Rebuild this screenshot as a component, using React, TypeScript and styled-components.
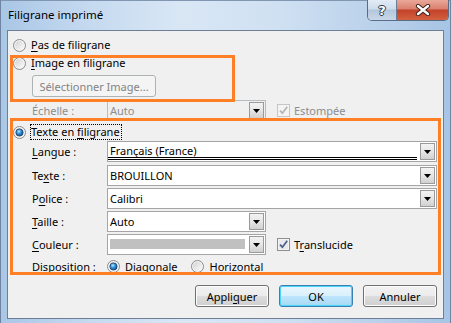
import React from 'react';
import styled, { createGlobalStyle } from 'styled-components';

const GlobalStyle = createGlobalStyle`
  html, body {
    margin: 0;
    padding: 0;
    overflow: hidden;
  }
  body {
    font-family: "Noto Sans", "Open Sans", sans-serif;
    font-size: 11px;
    color: #000;
  }
`;

const Window = styled.div`
  width: 451px;
  height: 323px;
  box-sizing: border-box;
  padding: 0 7px 4px 7px;
  display: flex;
  flex-direction: column;
  background: linear-gradient(to right, #a9c6e6 0%, #c3d8ef 18%, #d9e7f5 40%, #cfe0f2 62%, #b8d0ea 85%, #a6c4e5 100%);
  box-shadow: inset 1px 0 0 #6f84a0, inset -1px 0 0 #6f84a0, inset 0 1px 0 #8196b0;
`;

const TitleBar = styled.div`
  height: 30px;
  display: flex;
  align-items: flex-start;
`;

const Title = styled.div`
  margin-left: 1px;
  line-height: 30px;
  font-size: 11.5px;
  color: #000;
`;

const CaptionButtons = styled.div`
  margin-left: auto;
  margin-right: -5px;
  display: flex;
  height: 21px;
  border: 1px solid #5a6d86;
  border-top: none;
  border-radius: 0 0 5px 5px;
  overflow: hidden;
  box-sizing: border-box;
`;

const HelpButton = styled.div`
  width: 28px;
  display: flex;
  align-items: center;
  justify-content: center;
  background: linear-gradient(#e3ecf6 0%, #cfdceb 45%, #b3c6dc 50%, #c9d8e9 100%);
  border-right: 1px solid #6b7e96;
  font: bold 13px "DejaVu Sans", sans-serif;
  color: #fff;
  text-shadow: 0 0 1px #2c3d55, 1px 0 0 #2c3d55, -1px 0 0 #2c3d55, 0 1px 0 #2c3d55, 0 -1px 0 #2c3d55;
`;

const CloseButton = styled.div`
  width: 51px;
  display: flex;
  align-items: center;
  justify-content: center;
  background: linear-gradient(#eaa89a 0%, #d9806c 45%, #c2412a 50%, #d4613f 100%);
`;

const Client = styled.div`
  position: relative;
  flex: 1;
  border: 1px solid #6d7f96;
  background: #f0f0f0;
  display: flex;
  flex-direction: column;
  padding: 6px 0 0 0;
`;

const RadioOption = styled.label<{ $mt?: number }>`
  display: flex;
  align-items: center;
  gap: 5px;
  height: 16px;
  margin-top: ${(p) => p.$mt || 0}px;
  margin-left: 5px;
  line-height: 16px;
  white-space: nowrap;
`;

const InlineOption = styled.label`
  display: flex;
  align-items: center;
  gap: 5px;
  height: 16px;
  white-space: nowrap;
`;

const Focused = styled.span`
  box-sizing: border-box;
  height: 16px;
  line-height: 14px;
  border: 1px dotted #000;
  margin-left: -1px;
  padding: 0 1px 0 0;
`;

const Key = styled.span`
  text-decoration: underline;
  text-underline-offset: 2px;
`;

const PushButton = styled.button<{ $w: number; $default?: boolean }>`
  width: ${(p) => p.$w}px;
  height: 22px;
  box-sizing: border-box;
  padding: 0;
  font: inherit;
  color: ${(p) => (p.disabled ? '#838383' : '#000')};
  border: 1px solid ${(p) => (p.disabled ? '#adb2b5' : p.$default ? '#3c7fb1' : '#707070')};
  border-radius: 3px;
  background: ${(p) =>
    p.disabled
      ? '#f4f4f4'
      : p.$default
        ? 'linear-gradient(#eaf6fd 0%, #d9f0fc 50%, #bee6fd 50%, #a7d9f5 100%)'
        : 'linear-gradient(#f2f2f2 0%, #ebebeb 50%, #dddddd 50%, #cfcfcf 100%)'};
  box-shadow: inset 0 0 0 1px ${(p) => (p.disabled ? '#f4f4f4' : p.$default ? '#48d6fc' : '#fcfcfc')};
`;

const ImageButton = styled(PushButton)`
  margin: 4px 0 0 24px;
`;

const FieldRow = styled.div<{ $mt: number }>`
  display: flex;
  align-items: center;
  height: 21px;
  margin-top: ${(p) => p.$mt}px;
  padding-left: 24px;
`;

const FieldLabel = styled.span<{ $disabled?: boolean }>`
  width: 75px;
  flex-shrink: 0;
  color: ${(p) => (p.$disabled ? '#8d8d8d' : '#000')};
  white-space: nowrap;
`;

const Combo = styled.div<{ $w: number; $disabled?: boolean }>`
  width: ${(p) => p.$w}px;
  height: 21px;
  box-sizing: border-box;
  border: 1px solid ${(p) => (p.$disabled ? '#b7bcc0' : '#a5a5a5')};
  background: ${(p) => (p.$disabled ? '#f0f0f0' : '#fff')};
  color: ${(p) => (p.$disabled ? '#8d8d8d' : '#000')};
  display: flex;
  align-items: stretch;
`;

const ComboValue = styled.div`
  flex: 1;
  display: flex;
  align-items: center;
  padding-left: 2px;
  white-space: nowrap;
`;

const UnderlinedValue = styled.div`
  flex: 1;
  align-self: flex-start;
  margin: 2px 2px 0 0;
  padding-left: 2px;
  height: 16px;
  box-sizing: border-box;
  line-height: 13px;
  border-bottom: 3px double #000;
  white-space: nowrap;
`;

const Swatch = styled.div`
  flex: 1;
  align-self: flex-start;
  height: 10px;
  margin: 4px 3px 0 2px;
  background: #c0c0c0;
`;

const DropButton = styled.div`
  width: 15px;
  margin: 1px;
  box-sizing: border-box;
  border: 1px solid #9a9a9a;
  background: linear-gradient(#f3f3f3 0%, #e6e6e6 50%, #d0d0d0 100%);
  display: flex;
  align-items: center;
  justify-content: center;
`;

const CheckOption = styled.label<{ $disabled?: boolean }>`
  display: flex;
  align-items: center;
  gap: 4px;
  margin-left: 11px;
  color: ${(p) => (p.$disabled ? '#8d8d8d' : '#000')};
  white-space: nowrap;
`;

const Options = styled.div`
  display: flex;
  align-items: center;
  gap: 14px;
`;

const DispositionRow = styled.div`
  display: flex;
  align-items: center;
  height: 16px;
  margin-top: 3px;
  padding-left: 24px;
`;

const ButtonBar = styled.div`
  display: flex;
  justify-content: flex-end;
  gap: 10px;
  margin-top: 11px;
  padding-right: 6px;
`;

const Highlight = styled.div<{ $x: number; $y: number; $w: number; $h: number }>`
  position: absolute;
  left: ${(p) => p.$x}px;
  top: ${(p) => p.$y}px;
  width: ${(p) => p.$w}px;
  height: ${(p) => p.$h}px;
  box-sizing: border-box;
  border: 3px solid #ff7f27;
  pointer-events: none;
`;

const Radio = ({ checked }: { checked?: boolean }) => (
  <svg width="13" height="13" viewBox="0 0 13 13">
    <defs>
      <linearGradient id="rbg" x1="0" y1="0" x2="1" y2="1">
        <stop offset="0" stopColor="#d3d3d3" />
        <stop offset="1" stopColor="#fbfbfb" />
      </linearGradient>
      <radialGradient id="rdot" cx="0.4" cy="0.35" r="0.7">
        <stop offset="0" stopColor="#b9e6ff" />
        <stop offset="0.45" stopColor="#2d97e0" />
        <stop offset="1" stopColor="#0a4a88" />
      </radialGradient>
    </defs>
    <circle cx="6.5" cy="6.5" r="6" fill="#f4f4f4" stroke="#8b8b8b" />
    <circle cx="6.5" cy="6.5" r="4.5" fill="url(#rbg)" />
    {checked && <circle cx="6.5" cy="6.5" r="3.6" fill="url(#rdot)" stroke="#1f3e63" strokeWidth="0.8" />}
  </svg>
);

const Check = ({ disabled }: { disabled?: boolean }) => (
  <svg width="13" height="13" viewBox="0 0 13 13">
    <rect x="0.5" y="0.5" width="12" height="12" fill="#f4f4f4" stroke={disabled ? '#c6c6c6' : '#8e8f8f'} />
    <rect x="2" y="2" width="9" height="9" fill={disabled ? '#f4f4f4' : '#e9e9e9'} />
    <path
      d="M3 6.6 L5.4 9.2 L10.2 2.8"
      fill="none"
      stroke={disabled ? '#b5b5b5' : '#4a5e8c'}
      strokeWidth="1.7"
    />
  </svg>
);

const Arrow = () => (
  <svg width="7" height="4" viewBox="0 0 7 4">
    <polygon points="0,0 7,0 3.5,4" fill="#000" />
  </svg>
);

const CloseGlyph = () => (
  <svg width="16" height="12" viewBox="0 0 16 12">
    <path d="M3 2 L13 10 M13 2 L3 10" stroke="#3a1e1a" strokeWidth="4.2" strokeLinecap="round" />
    <path d="M3 2 L13 10 M13 2 L3 10" stroke="#ffffff" strokeWidth="2.4" strokeLinecap="round" />
  </svg>
);

const ComboBox = ({ w, disabled, children }: { w: number; disabled?: boolean; children: React.ReactNode }) => (
  <Combo $w={w} $disabled={disabled}>
    {children}
    <DropButton>
      <Arrow />
    </DropButton>
  </Combo>
);

export default function App() {
  return (
    <>
      <GlobalStyle />
      <Window>
        <TitleBar>
          <Title>Filigrane imprimé</Title>
          <CaptionButtons>
            <HelpButton>?</HelpButton>
            <CloseButton>
              <CloseGlyph />
            </CloseButton>
          </CaptionButtons>
        </TitleBar>
        <Client>
          <RadioOption>
            <Radio />
            <span>
              <Key>P</Key>as de filigrane
            </span>
          </RadioOption>
          <RadioOption $mt={2}>
            <Radio />
            <span>
              <Key>I</Key>mage en filigrane
            </span>
          </RadioOption>
          <ImageButton $w={124} disabled>
            Sélectionner Image...
          </ImageButton>
          <FieldRow $mt={3}>
            <FieldLabel $disabled>Échelle :</FieldLabel>
            <ComboBox w={159} disabled>
              <ComboValue>Auto</ComboValue>
            </ComboBox>
            <CheckOption $disabled>
              <Check disabled />
              Estompée
            </CheckOption>
          </FieldRow>
          <RadioOption $mt={3}>
            <Radio checked />
            <Focused>
              Texte en <Key>f</Key>iligrane
            </Focused>
          </RadioOption>
          <FieldRow $mt={1}>
            <FieldLabel>
              <Key>L</Key>angue :
            </FieldLabel>
            <ComboBox w={330}>
              <UnderlinedValue>Français (France)</UnderlinedValue>
            </ComboBox>
          </FieldRow>
          <FieldRow $mt={3}>
            <FieldLabel>
              Te<Key>x</Key>te :
            </FieldLabel>
            <ComboBox w={330}>
              <ComboValue>BROUILLON</ComboValue>
            </ComboBox>
          </FieldRow>
          <FieldRow $mt={2}>
            <FieldLabel>
              P<Key>o</Key>lice :
            </FieldLabel>
            <ComboBox w={330}>
              <ComboValue>Calibri</ComboValue>
            </ComboBox>
          </FieldRow>
          <FieldRow $mt={2}>
            <FieldLabel>
              <Key>T</Key>aille :
            </FieldLabel>
            <ComboBox w={159}>
              <ComboValue>Auto</ComboValue>
            </ComboBox>
          </FieldRow>
          <FieldRow $mt={2}>
            <FieldLabel>
              <Key>C</Key>ouleur :
            </FieldLabel>
            <ComboBox w={159}>
              <Swatch />
            </ComboBox>
            <CheckOption>
              <Check />
              <span>
                T<Key>r</Key>anslucide
              </span>
            </CheckOption>
          </FieldRow>
          <DispositionRow>
            <FieldLabel>Disposition :</FieldLabel>
            <Options>
              <InlineOption>
                <Radio checked />
                <span>
                  <Key>D</Key>iagonale
                </span>
              </InlineOption>
              <InlineOption>
                <Radio />
                <span>
                  <Key>H</Key>orizontal
                </span>
              </InlineOption>
            </Options>
          </DispositionRow>
          <ButtonBar>
            <PushButton $w={74}>
              Appli<Key>q</Key>uer
            </PushButton>
            <PushButton $w={74} $default>
              OK
            </PushButton>
            <PushButton $w={74}>Annuler</PushButton>
          </ButtonBar>
          <Highlight $x={2} $y={24} $w={225} $h={47} />
          <Highlight $x={2} $y={87} $w={431} $h={157} />
        </Client>
      </Window>
    </>
  );
}
